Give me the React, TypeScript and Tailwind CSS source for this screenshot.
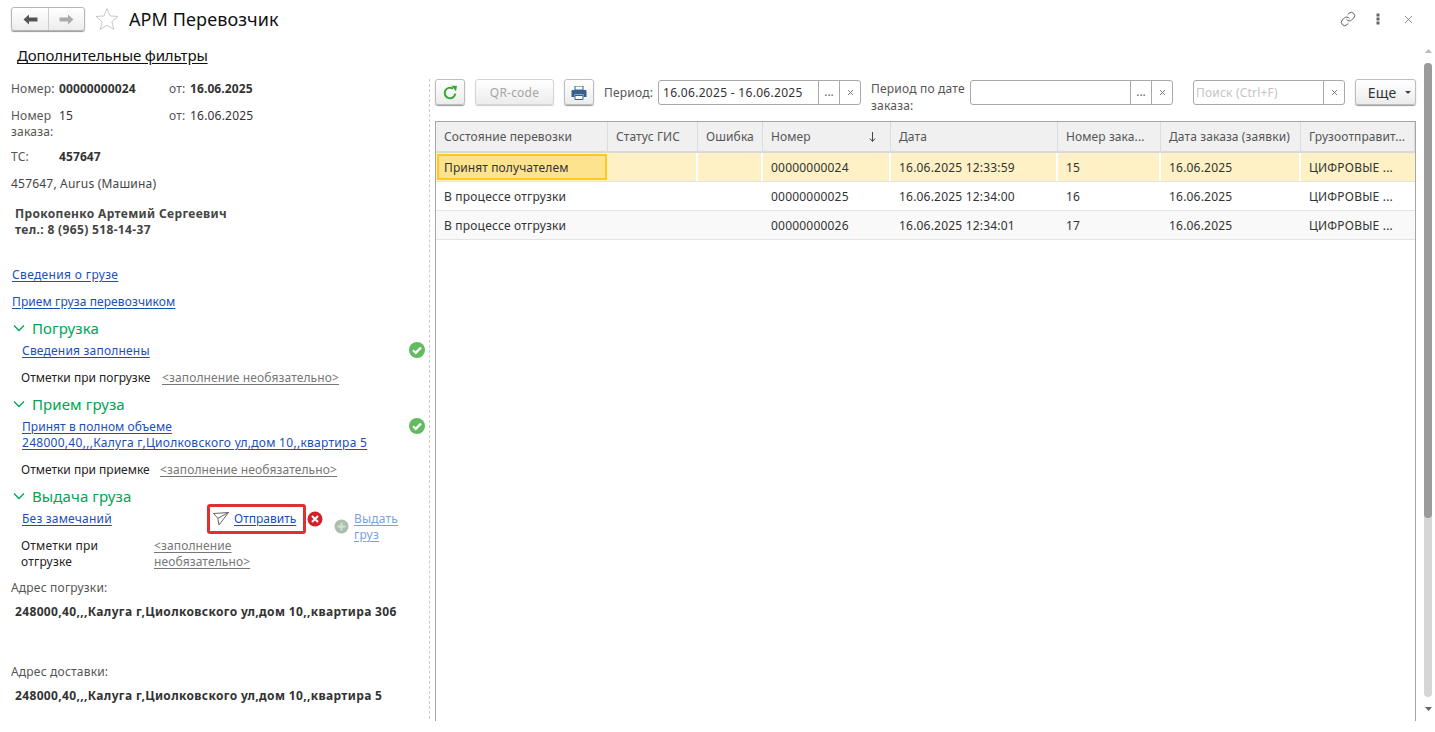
import { Link as LinkIcon, X } from "lucide-react";
import type { ReactNode } from "react";

const columns = ["Состояние перевозки", "Статус ГИС", "Ошибка", "Номер", "Дата", "Номер зака...", "Дата заказа (заявки)", "Грузоотправит..."];

const rows = [
  { state: "Принят получателем", num: "00000000024", date: "16.06.2025 12:33:59", order: "15", bg: "bg-[#fdf1c5]" },
  { state: "В процессе отгрузки", num: "00000000025", date: "16.06.2025 12:34:00", order: "16", bg: "bg-white" },
  { state: "В процессе отгрузки", num: "00000000026", date: "16.06.2025 12:34:01", order: "17", bg: "bg-[#f9f9f9]" },
];

function BlueLink({ children, className = "" }: { children: ReactNode; className?: string }) {
  return <a className={`text-[#1a4fb8] underline underline-offset-2 ${className}`}>{children}</a>;
}

function GrayLink({ children }: { children: ReactNode }) {
  return <a className="tracking-[0.12px] text-[#777] underline underline-offset-2">{children}</a>;
}

function Section({ title, className = "" }: { title: string; className?: string }) {
  return (
    <div className={`flex h-5 items-center pb-[2px] pl-[13px] text-[15px] tracking-[0.1px] text-[#00a455] ${className}`}>
      <svg width="12" height="8" viewBox="0 0 12 8" fill="none" stroke="#00a455" strokeWidth="1.3" className="mr-[7px]">
        <path d="M1 1.5l5 5 5-5" />
      </svg>
      {title}
    </div>
  );
}

function CheckBadge() {
  return (
    <svg width="16" height="16" viewBox="0 0 16 16" className="absolute left-[409px] top-[-1px]">
      <circle cx="8" cy="8" r="8" fill="#62bb5e" />
      <path d="M4 8.2l2.7 2.7L12 5.6" fill="none" stroke="#fff" strokeWidth="2.2" />
    </svg>
  );
}

function Field({ children, width }: { children?: ReactNode; width: string }) {
  return (
    <div className={`mt-px flex h-[25px] items-stretch rounded-[3px] border border-[#a9a9a9] bg-white ${width}`}>
      <div className="flex min-w-0 flex-1 items-center pl-1 pt-px text-[#333]">{children}</div>
      <div className="flex w-[21px] items-center justify-center border-l border-[#a9a9a9] pb-0.5 tracking-normal text-[#666]">...</div>
      <div className="flex w-[21px] items-center justify-center border-l border-[#a9a9a9]">
        <X size={9} strokeWidth={2} color="#555" />
      </div>
    </div>
  );
}

function ToolButton({ children, className = "" }: { children: ReactNode; className?: string }) {
  return (
    <div className={`flex h-[26px] items-center justify-center rounded-[3px] border border-[#bdbdbd] bg-gradient-to-b from-white to-[#ececec] pt-px shadow-[0_1px_1px_#9a9a9a] ${className}`}>
      {children}
    </div>
  );
}

export default function App() {
  return (
    <div className="h-[732px] w-[1435px] overflow-hidden bg-white [font-family:'Liberation_Sans',Arial,sans-serif] text-[12px] leading-4 tracking-[0.2px] text-[#333]">
      {/* top bar */}
      <div className="flex h-[38px] items-center pl-[11px] pr-[20px]">
        <div className="flex h-6 w-[74px] rounded-[3px] border border-[#b5b5b5] bg-gradient-to-b from-white to-[#ededed] shadow-[0_1px_1px_#999]">
          <div className="flex w-[37px] items-center justify-center border-r border-[#ccc]">
            <svg width="15" height="11" viewBox="0 0 15 11" fill="#555"><path d="M0.5 5.5L6 0.5v3h8.5v4H6v3z" /></svg>
          </div>
          <div className="flex flex-1 items-center justify-center">
            <svg width="15" height="11" viewBox="0 0 15 11" fill="#aaa"><path d="M14.5 5.5L9 0.5v3H0.5v4H9v3z" /></svg>
          </div>
        </div>
        <svg width="24" height="24" viewBox="0 0 24 24" fill="none" stroke="#c4c8cc" strokeWidth="1" className="ml-[10px]">
          <path d="M12 1.5l3 7.4 8 .6-6.100 5.100 1.900 7.800L12 18.200l-6.800 4.200 1.900-7.800L1 9.500l8-.6z" />
        </svg>
        <div className="ml-[10px] text-[18px] leading-6 tracking-[0.1px] text-[#111]">АРМ Перевозчик</div>
        <div className="ml-auto flex items-center">
          <LinkIcon size={16} strokeWidth={1.4} color="#555" />
          <svg width="4" height="12" viewBox="0 0 4 12" fill="#666" className="ml-[20px]">
            <rect x="0.5" y="0.5" width="3" height="3" />
            <rect x="0.5" y="4.500" width="3" height="3" />
            <rect x="0.5" y="8.500" width="3" height="3" />
          </svg>
          <X size={13} strokeWidth={1.2} color="#555" className="ml-[22px]" />
        </div>
      </div>

      <div className="flex">
        <div className="w-[1424px]">
          <div className="h-[41px] pl-[17px] pt-[7px] text-[15px] leading-[20px] tracking-[-0.15px] text-[#111] underline underline-offset-2">
            Дополнительные фильтры
          </div>

          <div className="flex">
            {/* left column */}
            <div className="h-[640px] w-[430px] border-r border-dashed border-[#ccc] pt-[2px]">
              <div className="flex">
                <div className="ml-[11px] w-12 text-[#555]">Номер:</div>
                <div className="w-[110px] font-bold tracking-[0.1px]">00000000024</div>
                <div className="w-[21px] text-[#555]">от:</div>
                <div className="font-bold tracking-[0.1px]">16.06.2025</div>
              </div>
              <div className="mt-[11px] flex h-8">
                <div className="ml-[11px] w-12 text-[#555]">Номер заказа:</div>
                <div className="w-[110px]">15</div>
                <div className="w-[21px] text-[#555]">от:</div>
                <div>16.06.2025</div>
              </div>
              <div className="mt-[9px] flex">
                <div className="ml-[11px] w-12 text-[#555]">ТС:</div>
                <div className="font-bold tracking-[0.1px]">457647</div>
              </div>
              <div className="ml-[11px] mt-[11px] text-[#444]">457647, Aurus (Машина)</div>
              <div className="ml-[15px] mt-[14px] font-bold tracking-[0.35px] text-[#444]">
                <div>Прокопенко Артемий Сергеевич</div>
                <div>тел.: 8 (965) 518-14-37</div>
              </div>
              <div className="ml-3 mt-[29px]"><BlueLink className="tracking-[0.35px]">Сведения о грузе</BlueLink></div>
              <div className="ml-3 mt-[11px]"><BlueLink className="tracking-[0.1px]">Прием груза перевозчиком</BlueLink></div>

              <Section title="Погрузка" className="mt-[9px]" />
              <div className="relative mt-1 pl-[22px]">
                <BlueLink>Сведения заполнены</BlueLink>
                <CheckBadge />
              </div>
              <div className="mt-[11px] flex pl-[21px] text-[#222]">
                <span className="w-[141px] tracking-normal">Отметки при погрузке</span>
                <GrayLink>&lt;заполнение необязательно&gt;</GrayLink>
              </div>

              <Section title="Прием груза" className="mt-[9px]" />
              <div className="relative mt-1 h-8 pl-[22px]">
                <BlueLink className="tracking-[0.05px]">Принят в полном объеме</BlueLink>
                <br />
                <BlueLink className="tracking-[0.28px]">248000,40,,,Калуга г,Циолковского ул,дом 10,,квартира 5</BlueLink>
                <CheckBadge />
              </div>
              <div className="mt-[11px] flex pl-[21px] text-[#222]">
                <span className="w-[139px] tracking-normal">Отметки при приемке</span>
                <GrayLink>&lt;заполнение необязательно&gt;</GrayLink>
              </div>

              <Section title="Выдача груза" className="mt-[9px]" />
              <div className="relative mt-1 flex h-4 pl-[22px]">
                <div className="w-[191px]"><BlueLink>Без замечаний</BlueLink></div>
                <svg width="16" height="14" viewBox="0 0 16 14" fill="none" stroke="#666" strokeWidth="1" className="mt-px">
                  <path d="M0.500 1.500L15.500 0.500 6 13 4.800 6.300zM4.800 6.300L15.500 0.500" />
                </svg>
                <BlueLink className="ml-[5px] tracking-normal">Отправить</BlueLink>
                {/* red annotation frame */}
                <div className="absolute left-[207px] top-[-7px] h-[30px] w-[99px] rounded-[3px] border-[3px] border-[#e0322d]" />
                <svg width="16" height="16" viewBox="0 0 16 16" className="absolute left-[307px] top-0">
                  <circle cx="8" cy="8" r="7.500" fill="#d3202b" />
                  <path d="M5 5l6 6M11 5l-6 6" stroke="#fff" strokeWidth="2" />
                </svg>
                <svg width="15" height="15" viewBox="0 0 15 15" className="absolute left-[334px] top-[8px]">
                  <circle cx="7.500" cy="7.500" r="7" fill="#a9bfae" />
                  <path d="M7.500 3.500v8M3.500 7.500h8" stroke="#d5dfd7" strokeWidth="2" />
                </svg>
                <a className="absolute left-[354px] top-0 w-[50px] text-[#7c9fe0] underline underline-offset-2">Выдать груз</a>
              </div>
              <div className="mt-[11px] flex h-8 pl-[21px] text-[#222]">
                <span className="mr-[53px] w-[80px]">Отметки при отгрузке</span>
                <div className="w-[120px]"><GrayLink>&lt;заполнение необязательно&gt;</GrayLink></div>
              </div>

              <div className="ml-[11px] mt-[10px] text-[#555]">Адрес погрузки:</div>
              <div className="ml-[15px] mt-2 font-bold tracking-[0.35px]">248000,40,,,Калуга г,Циолковского ул,дом 10,,квартира 306</div>
              <div className="ml-[11px] mt-[44px] text-[#555]">Адрес доставки:</div>
              <div className="ml-[15px] mt-2 font-bold tracking-[0.35px]">248000,40,,,Калуга г,Циолковского ул,дом 10,,квартира 5</div>
            </div>

            {/* right column */}
            <div className="ml-[5px] w-[981px]">
              <div className="flex h-[42px] items-start">
                <ToolButton className="w-[30px]">
                  <svg width="16" height="16" viewBox="0 0 16 16" fill="none">
                    <path d="M13.300 8.500A5.300 5.300 0 1 1 11 3.600" stroke="#38a832" strokeWidth="2" />
                    <path d="M9.500 0.500L15 1l-1 5.500z" fill="#38a832" />
                  </svg>
                </ToolButton>
                <ToolButton className="ml-[10px] w-[79px] border-[#d5d5d5] text-[#a5a5a5] shadow-[0_1px_1px_#ccc]">QR-code</ToolButton>
                <ToolButton className="ml-[10px] w-[30px]">
                  <svg width="16" height="14" viewBox="0 0 16 14">
                    <path d="M4 0h8v4H4z" fill="#fff" stroke="#35608c" />
                    <path d="M1.500 4h13a1 1 0 0 1 1 1v6h-3V8.500h-9V11h-3V5a1 1 0 0 1 1-1z" fill="#35608c" />
                    <path d="M4 9.500h8v4H4z" fill="#fff" stroke="#35608c" />
                  </svg>
                </ToolButton>
                <div className="ml-[10px] flex h-[26px] w-[54px] items-center pt-px text-[#555]">Период:</div>
                <Field width="w-[203px]"><span className="tracking-[0.3px] text-[#333]">16.06.2025 - 16.06.2025</span></Field>
                <div className="ml-[10px] mt-px w-[99px] leading-[17px] text-[#555]">Период по дате заказа:</div>
                <Field width="w-[203px]" />
                <div className="ml-5 mt-px flex h-[25px] w-[152px] items-stretch rounded-[3px] border border-[#a9a9a9]">
                  <div className="flex flex-1 items-center pl-0.5 pt-px text-[#c4c4c4]">Поиск (Ctrl+F)</div>
                  <div className="flex w-[21px] items-center justify-center border-l border-[#a9a9a9]">
                    <X size={9} strokeWidth={2} color="#555" />
                  </div>
                </div>
                <ToolButton className="ml-[10px] w-[61px] pl-2 text-[14px] tracking-[0.2px] text-[#333]">
                  Еще
                  <svg width="6" height="3" viewBox="0 0 6 3" fill="#444" className="ml-[9px]"><path d="M0 0h6L3 3z" /></svg>
                </ToolButton>
              </div>

              {/* table */}
              <div className="h-[600px] w-[981px] border-x border-t border-[#a6a6a6]">
                <div className="grid h-[31px] grid-cols-[172px_90px_65px_128px_167px_103px_140px_114px] bg-[#f0f0f0]">
                  {columns.map((c, i) => (
                    <div key={c} className="flex items-center justify-between overflow-hidden whitespace-nowrap border-b-2 border-r border-b-[#d9d9d9] border-r-[#dcdcdc] pl-2 pr-[14px] tracking-[0.1px] text-[#555]">
                      {c}
                      {i === 3 && (
                        <svg width="7" height="10" viewBox="0 0 7 10" fill="none" stroke="#444"><path d="M3.500 0v9M1 6.500l2.500 3 2.500-3" /></svg>
                      )}
                    </div>
                  ))}
                </div>
                {rows.map((r, i) => (
                  <div key={r.num} className={`grid h-[29px] grid-cols-[172px_90px_65px_128px_167px_103px_140px_114px] border-b border-[#e3e3e3] ${r.bg}`}>
                    <div className={i === 0 ? "m-px flex items-center border-2 border-[#fcc923] bg-[#fee38f] pl-[5px] pt-px tracking-[0.1px]" : "flex items-center pl-2 pt-[2px]"}>{r.state}</div>
                    <div className={i === 0 ? "border-r-2 border-white" : ""} />
                    <div className={i === 0 ? "border-r-2 border-white" : ""} />
                    <div className={`flex items-center pl-2 pt-[2px] ${i === 0 ? "border-r-2 border-white" : ""}`}>{r.num}</div>
                    <div className={`flex items-center pl-2 pt-[2px] ${i === 0 ? "border-r-2 border-white" : ""}`}>{r.date}</div>
                    <div className={`flex items-center pl-2 pt-[2px] ${i === 0 ? "border-r-2 border-white" : ""}`}>{r.order}</div>
                    <div className={`flex items-center pl-2 pt-[2px] ${i === 0 ? "border-r-2 border-white" : ""}`}>16.06.2025</div>
                    <div className="flex items-center overflow-hidden whitespace-nowrap pl-2 pt-[2px]">ЦИФРОВЫЕ ...</div>
                  </div>
                ))}
              </div>
            </div>
          </div>
        </div>

        {/* page scrollbar */}
        <div className="flex w-2 flex-col items-center pt-[11px]">
          <svg width="7" height="4" viewBox="0 0 7 4" fill="#bbb"><path d="M0 4h7L3.500 0z" /></svg>
          <div className="mt-[10px] h-[634px] w-2 rounded-[4px] bg-[#d6d6d6]">
            <div className="h-[455px] rounded-[4px] bg-[#9b9b9b]" />
          </div>
          <svg width="7" height="4" viewBox="0 0 7 4" fill="#666" className="mt-[10px]"><path d="M0 0h7L3.500 4z" /></svg>
        </div>
      </div>
    </div>
  );
}
